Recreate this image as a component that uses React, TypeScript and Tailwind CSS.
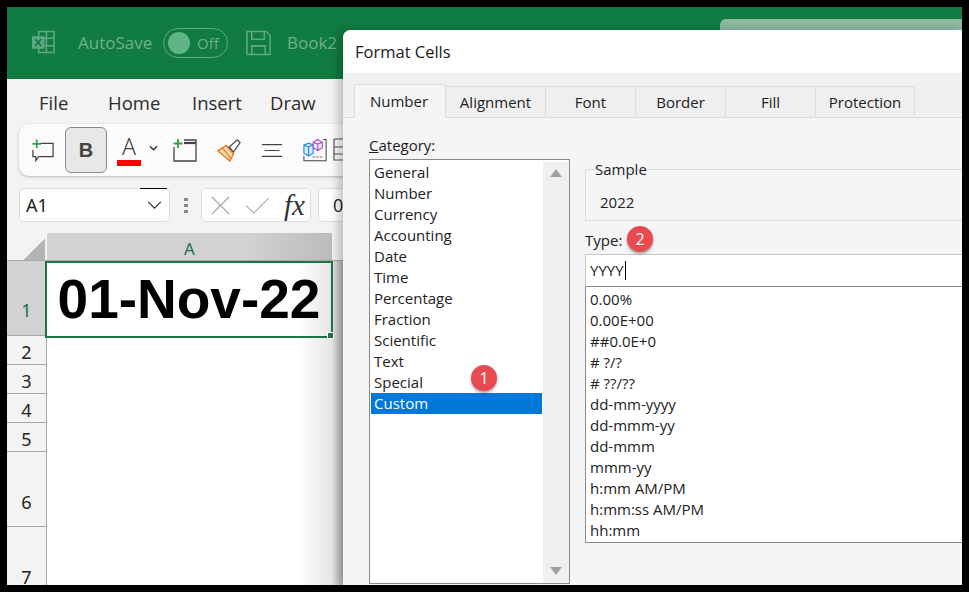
const categories = ["General", "Number", "Currency", "Accounting", "Date", "Time", "Percentage", "Fraction", "Scientific", "Text", "Special", "Custom"];
const formats = ["0.00%", "0.00E+00", "##0.0E+0", "# ?/?", "# ??/??", "dd-mm-yyyy", "dd-mmm-yy", "dd-mmm", "mmm-yy", "h:mm AM/PM", "h:mm:ss AM/PM", "hh:mm"];
const rows = ["2", "3", "4", "5"];
const tabs = ["Alignment", "Font", "Border", "Fill", "Protection"];
const tabWidths = ["w-[100px]", "w-[90px]", "w-[90px]", "w-[90px]", "w-[99px]"];

export default function App() {
  return (
    <div className="relative h-[592px] w-[969px] overflow-hidden bg-black px-[7px] pb-[7px] pt-[7px] font-['Open_Sans','Noto_Sans',sans-serif] text-[15px] text-[#1a1a1a]">
      <div className="flex h-[578px] w-[955px] flex-col overflow-hidden bg-[#f3f3f3]">
        <TitleBar />
        <div className="flex h-[45px] shrink-0 items-center pl-[32px] pt-[3px] text-[18.500px] text-[#2b2b2b]">
          <span className="w-[69px]">File</span>
          <span className="w-[84px]">Home</span>
          <span className="w-[78px]">Insert</span>
          <span>Draw</span>
        </div>
        <Toolbar />
        <FormulaBar />
        <Sheet />
      </div>
      <Dialog />
    </div>
  );
}

function TitleBar() {
  return (
    <div className="flex h-[72px] shrink-0 items-center bg-[#107c41] pl-[24px] text-[17px] text-[#6fb08d]">
      <svg viewBox="0 0 26 24" width="25" height="24" className="mb-[2px]">
        <path d="M8 1h16v22H8z" fill="none" stroke="#5fa883" strokeWidth="1.6" />
        <path d="M8 8h16M8 16h16M16 1v22" stroke="#5fa883" strokeWidth="1.6" />
        <rect x="1" y="6" width="13" height="13" fill="#5fa883" />
        <path d="M4.500 9l6 7M10.500 9l-6 7" stroke="#107c41" strokeWidth="1.7" />
      </svg>
      <span className="ml-[22px] mb-[1px] w-[76px] whitespace-nowrap">AutoSave</span>
      <div className="ml-[9px] flex h-[30px] w-[65px] items-center rounded-full border border-[#5fa883] pl-[4px]">
        <span className="h-[22px] w-[22px] rounded-full bg-[#5fb587]" />
        <span className="ml-[7px] text-[15px]">Off</span>
      </div>
      <svg viewBox="0 0 26 26" width="25" height="26" className="ml-[18px]" fill="none" stroke="#5fa883" strokeWidth="1.6">
        <path d="M1 1h20l4 4v20H1z" />
        <path d="M6 1v8h13V1M6 25v-9h14v9" />
      </svg>
      <span className="ml-[16px]">Book2</span>
      <div className="ml-auto mt-[12px] h-[20px] w-[242px] self-start rounded-tl-[6px] bg-[#8db9a1]" />
    </div>
  );
}

function Toolbar() {
  return (
    <div className="ml-[12px] flex h-[52px] w-[400px] shrink-0 items-center rounded-[10px] bg-[#fbfbfb] pl-[12px] shadow-[0_1px_3px_rgba(0,0,0,0.25)]">
      <svg viewBox="0 0 24 24" width="23" height="24" fill="none">
        <path d="M9 5h14v14H8l-3 4v-4H2v-7" stroke="#444" strokeWidth="1.3" />
        <path d="M6 1v9M1.500 5.500h9" stroke="#2ea043" strokeWidth="1.8" />
      </svg>
      <div className="ml-[11px] flex h-[46px] w-[42px] items-center justify-center rounded-[6px] border border-[#8a8a8a] bg-[#e8e8e8] font-['Liberation_Sans',sans-serif] text-[20px] font-bold text-[#444]">B</div>
      <div className="ml-[10px] flex w-[24px] flex-col items-center">
        <span className="h-[22px] font-['Noto_Sans',sans-serif] text-[23px] font-light leading-[22px] text-[#444]">A</span>
        <span className="mt-[3px] h-[6px] w-[24px] bg-[#ff0000]" />
      </div>
      <svg viewBox="0 0 10 6" width="9" height="6" fill="none" className="ml-[8px] mb-[4px]">
        <path d="M1 1l4 4 4-4" stroke="#333" strokeWidth="1.4" />
      </svg>
      <svg viewBox="0 0 24 24" width="24" height="24" fill="none" className="ml-[15px]">
        <path d="M1 9v14h22V2H11" stroke="#444" strokeWidth="1.3" />
        <path d="M11 5h12" stroke="#444" strokeWidth="2.200" />
        <path d="M5 1v9M0.500 5.500h9" stroke="#2ea043" strokeWidth="1.8" />
      </svg>
      <svg viewBox="0 0 26 26" width="24" height="24" fill="none" className="ml-[20px]">
        <path d="M1 14l9-6 8 9-4 8z" fill="#fbd9b0" stroke="#e8791a" strokeWidth="1.5" />
        <path d="M6 11l9 11M10 8l8 9" stroke="#e8791a" strokeWidth="1.3" />
        <path d="M13 10l9-8 3 3-7 10z" fill="#fff" stroke="#444" strokeWidth="1.3" />
      </svg>
      <svg viewBox="0 0 24 16" width="22" height="15" fill="none" className="ml-[20px]">
        <path d="M1 1.500h22M4 8h16M1 14.500h22" stroke="#444" strokeWidth="1.3" />
      </svg>
      <svg viewBox="0 0 26 26" width="24" height="25" fill="none" className="ml-[20px]">
        <path d="M22 1h3v23H1v-5" stroke="#444" strokeWidth="1.1" />
        <path d="M10 20h12" stroke="#777" strokeWidth="1.1" strokeDasharray="3 1" />
        <path d="M1 7l5-2 5 2v9l-5 3-5-3zM1 7l5 2 5-2M6 9v10" fill="#d8eefc" stroke="#1b8fe0" strokeWidth="1.3" />
        <path d="M11 4l5-3 5 3v6l-5 3-5-3zM11 4l5 2 5-2M16 6v7" fill="#f3e4f8" stroke="#a653c9" strokeWidth="1.2" />
      </svg>
      <svg viewBox="0 0 12 26" width="12" height="26" fill="none" className="ml-[6px]">
        <path d="M1 2h11M1 2v21h11M1 10h11M1 17h11" stroke="#555" strokeWidth="1.2" />
      </svg>
    </div>
  );
}

function FormulaBar() {
  return (
    <div className="ml-[12px] mt-[12px] flex h-[34px] shrink-0 items-center">
      <div className="relative flex h-[34px] w-[151px] items-center justify-between rounded-[5px] border border-[#dcdcdc] bg-white pl-[6px] pr-[7px] font-['Noto_Sans',sans-serif] text-[18px] text-[#222]">
        <span className="absolute right-[2px] top-[-1px] h-[1px] w-[27px] bg-black" />
        A1
        <svg viewBox="0 0 16 10" width="15" height="9" fill="none">
          <path d="M1 1l7 7 7-7" stroke="#333" strokeWidth="1.4" />
        </svg>
      </div>
      <div className="ml-[14px] flex h-[15px] w-[4px] flex-col justify-between">
        <span className="h-[3px] w-[4px] bg-[#8a8a8a]" />
        <span className="h-[3px] w-[4px] bg-[#8a8a8a]" />
        <span className="h-[3px] w-[4px] bg-[#8a8a8a]" />
      </div>
      <div className="ml-[13px] flex h-[34px] w-[110px] items-center rounded-[5px] border border-[#dcdcdc] bg-white pl-[9px]">
        <svg viewBox="0 0 20 20" width="19" height="19" fill="none">
          <path d="M1 1l18 18M19 1L1 19" stroke="#a8a8a8" strokeWidth="1.3" />
        </svg>
        <svg viewBox="0 0 26 20" width="25" height="19" fill="none" className="ml-[15px]">
          <path d="M1 10l8 8L25 2" stroke="#b4b4b4" strokeWidth="1.3" />
        </svg>
        <span className="ml-[14px] font-['Liberation_Serif',serif] text-[29px] italic leading-none text-[#333]">fx</span>
      </div>
      <div className="ml-[7px] flex h-[34px] w-[40px] items-center rounded-l-[5px] border border-[#dcdcdc] bg-white pl-[14px] text-[18px]">0</div>
    </div>
  );
}

function Sheet() {
  return (
    <div className="mt-[11px] flex-1">
      <div className="flex h-[28px] border-b border-[#a8a8a8]">
        <div className="flex h-[27px] w-[39px] items-end justify-end bg-[#f3f3f3] pr-px">
          <div className="h-[21px] w-[21px] bg-[linear-gradient(135deg,transparent_50%,#b4b4b4_50%)]" />
        </div>
        <div className="ml-px flex h-[27px] w-[285px] items-end justify-center bg-[linear-gradient(90deg,#d2d2d2_70%,#bbbbbb)] font-['Noto_Sans',sans-serif] text-[17px] leading-[23px] text-[#1f6e54]">A</div>
      </div>
      <div className="flex">
        <div className="w-[40px] border-r border-[#a8a8a8] text-center font-['Noto_Sans',sans-serif] text-[18px] text-[#222]">
          <div className="flex h-[75px] items-end justify-center border-b border-[#a8a8a8] bg-[#d2d2d2] pb-[11px] text-[#1f6e54]">1</div>
          {rows.map((n) => (
            <div key={n} className="flex h-[29px] items-center justify-center border-b border-[#a8a8a8] pt-[5px]">
              {n}
            </div>
          ))}
          <div className="flex h-[75px] items-end justify-center border-b border-[#a8a8a8] pb-[10px]">6</div>
          <div className="flex h-[58px] items-start justify-center pt-[42px] leading-[16px]">7</div>
        </div>
        <div className="relative h-[324px] w-[297px] bg-[linear-gradient(90deg,#ffffff_84%,#e6e6e6_96%,#b4b4b4)]">
          <div className="relative ml-[-2px] flex h-[77px] w-[288px] items-center justify-center border-2 border-[#217346] font-['Liberation_Sans',sans-serif] text-[55px] font-bold leading-none text-black">
            01-Nov-22
            <span className="absolute bottom-[-3px] right-[-3px] h-[7px] w-[7px] border border-white bg-[#217346]" />
          </div>
        </div>
      </div>
    </div>
  );
}

function Badge({ n, className }: { n: string; className: string }) {
  return (
    <span className={`absolute flex h-[26px] w-[26px] items-center justify-center rounded-full bg-[#e84a4f] text-[16px] text-white shadow-[0_2px_3px_rgba(0,0,0,0.35)] ${className}`}>
      {n}
    </span>
  );
}

function Dialog() {
  return (
    <div className="absolute left-[343px] top-[30px] flex h-[555px] w-[619px] flex-col overflow-hidden rounded-tl-[8px] bg-[#f0f0f0] text-[15px] text-[#222] shadow-[-5px_0_10px_rgba(0,0,0,0.22)]">
      <div className="flex h-[43px] shrink-0 items-center bg-white pl-[12px] pt-px text-[16.500px] text-[#1a1a1a]">Format Cells</div>
      <div className="flex h-[45px] shrink-0 items-end border-b border-[#dcdcdc] pl-[11px]">
        <div className="mb-[-1px] flex h-[34px] w-[92px] items-center justify-center rounded-t-[2px] border border-b-0 border-[#dcdcdc] bg-[#f5f5f5] pr-[2px] pb-px">Number</div>
        {tabs.map((t, i) => (
          <div key={t} className={`flex h-[31px] items-center justify-center border border-b-0 border-l-0 border-[#dcdcdc] bg-[#efefef] pt-px ${tabWidths[i]}`}>
            {t}
          </div>
        ))}
      </div>
      <div className="flex flex-1 bg-[#f5f5f5] pl-[26px]">
        <div className="w-[216px] shrink-0">
          <div className="mt-[16px] h-[25px]">
            <span className="underline">C</span>ategory:
          </div>
          <div className="relative flex h-[425px] w-[201px] border border-[#8a8a8a] bg-white pl-[1px] pt-[2px]">
            <div className="w-[171px]">
              {categories.map((c) => (
                <div key={c} className={`flex h-[21px] items-center pl-[3px] ${c === "Custom" ? "bg-[#0078d7] text-white" : ""}`}>
                  {c}
                </div>
              ))}
            </div>
            <div className="ml-auto flex w-[26px] flex-col items-center justify-between bg-[#f0f0f0] pb-[8px] pt-[7px]">
              <span className="h-0 w-0 border-x-[6px] border-b-[8px] border-x-transparent border-b-[#a0a0a0]" />
              <span className="h-0 w-0 border-x-[6px] border-t-[8px] border-x-transparent border-t-[#a0a0a0]" />
            </div>
            <Badge n="1" className="left-[101px] top-[205px]" />
          </div>
        </div>
        <div className="relative flex-1">
          <fieldset className="mt-[41px] h-[62px] border border-r-0 border-[#dcdcdc] pl-[8px]">
            <legend className="px-px leading-[20px]">Sample</legend>
            <div className="ml-[6px] mt-[12px]">2022</div>
          </fieldset>
          <div className="mt-[6px] flex h-[27px] items-center">
            <span>Type:</span>
            <Badge n="2" className="left-[42px] top-[108px]" />
          </div>
          <div className="flex h-[33px] items-center border border-r-0 border-b-[#8a8a8a] border-t-[#c8c8c8] border-l-[#c8c8c8] bg-white pl-[4px]">
            YYYY<span className="ml-px h-[19px] w-px bg-black" />
          </div>
          <div className="h-[256px] border border-t-0 border-r-0 border-[#8a8a8a] bg-white pl-[4px] pt-[2px]">
            {formats.map((f) => (
              <div key={f} className="flex h-[21px] items-center">{f}</div>
            ))}
          </div>
        </div>
      </div>
    </div>
  );
}
